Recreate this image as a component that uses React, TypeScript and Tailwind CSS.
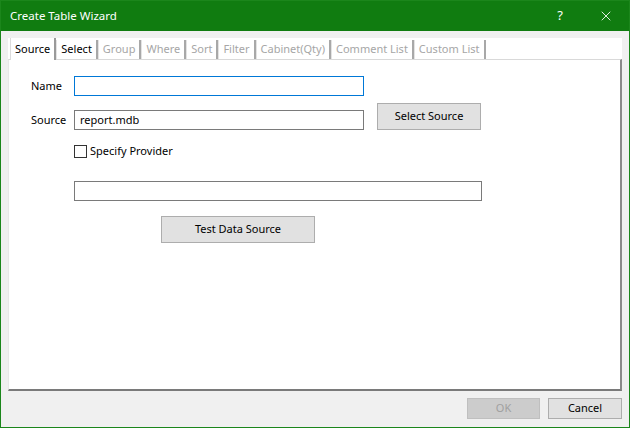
import { X } from 'lucide-react';

const tabs = [
  { label: 'Source', active: true, enabled: true },
  { label: 'Select', active: false, enabled: true },
  { label: 'Group', active: false, enabled: false },
  { label: 'Where', active: false, enabled: false },
  { label: 'Sort', active: false, enabled: false },
  { label: 'Filter', active: false, enabled: false },
  { label: 'Cabinet(Qty)', active: false, enabled: false },
  { label: 'Comment List', active: false, enabled: false },
  { label: 'Custom List', active: false, enabled: false },
];

const font = { fontFamily: '"Noto Sans", "Segoe UI", sans-serif' };

export default function App() {
  return (
    <div
      className="w-[630px] h-[428px] flex flex-col border border-[#1b861b] bg-[#f0f0f0] text-[11px] text-black overflow-hidden"
      style={font}
    >
      {/* title bar */}
      <div className="h-[30px] bg-[#107c10] flex items-center text-white shrink-0">
        <span className="pl-[9px] flex-1 text-[11.5px]">Create Table Wizard</span>
        <span className="w-[46px] text-center text-[13px]">?</span>
        <span className="w-[46px] flex justify-center">
          <X size={16} strokeWidth={1.3} />
        </span>
      </div>

      {/* tab control */}
      <div className="flex-1 flex flex-col pt-[7px] px-[7px]">
        <div className="h-[353px] bg-white flex flex-col">
          <div className="h-[21px] flex items-stretch pl-[2px] shrink-0">
            {tabs.map((t) => (
              <div
                key={t.label}
                className={`flex items-center px-[4px] border-r-2 ${
                  t.active
                    ? 'border-l border-[#dcdcdc] border-r-[#9a9a9a] -mb-px bg-white z-10 pt-[1px]'
                    : 'border-l border-l-[#e3e3e3] border-r-[#a8a8a8] mt-[2px]'
                } ${t.enabled ? 'text-black' : 'text-[#a6a6a6]'}`}
              >
                {t.label}
              </div>
            ))}
          </div>

          <div className="flex-1 border-t border-[#d9d9d9] border-l border-l-[#e8e8e8] border-r-2 border-r-[#8a8a8a] border-b-2 border-b-[#7a7a7a] pl-[22px] pt-[16px] flex flex-col">
            <div className="flex items-center h-[20px]">
              <span className="w-[43px]">Name</span>
              <div className="w-[290px] h-[20px] border border-[#0078d7] bg-white" />
            </div>

            <div className="flex items-end mt-[7px]">
              <span className="w-[43px] h-[20px] flex items-center">Source</span>
              <div className="w-[290px] h-[20px] border border-[#7a7a7a] bg-white flex items-center px-[5px]">
                report.mdb
              </div>
              <button className="ml-[13px] w-[104px] h-[27px] bg-[#e1e1e1] border border-[#adadad] text-black">
                Select Source
              </button>
            </div>

            <label className="flex items-center h-[13px] mt-[15px] ml-[43px]">
              <span className="w-[13px] h-[13px] border border-[#333] bg-white" />
              <span className="ml-[3px]">Specify Provider</span>
            </label>

            <div className="ml-[43px] mt-[23px] w-[408px] h-[20px] border border-[#7a7a7a] bg-white" />

            <button className="ml-[130px] mt-[15px] w-[154px] h-[27px] bg-[#e1e1e1] border border-[#adadad] text-black">
              Test Data Source
            </button>
          </div>
        </div>

        <div className="flex justify-end gap-[8px] mt-[7px]">
          <button className="w-[73px] h-[21px] bg-[#cccccc] border border-[#bfbfbf] text-[#a0a0a0]">
            OK
          </button>
          <button className="w-[74px] h-[21px] bg-[#e1e1e1] border border-[#adadad] text-black">
            Cancel
          </button>
        </div>
      </div>
    </div>
  );
}
